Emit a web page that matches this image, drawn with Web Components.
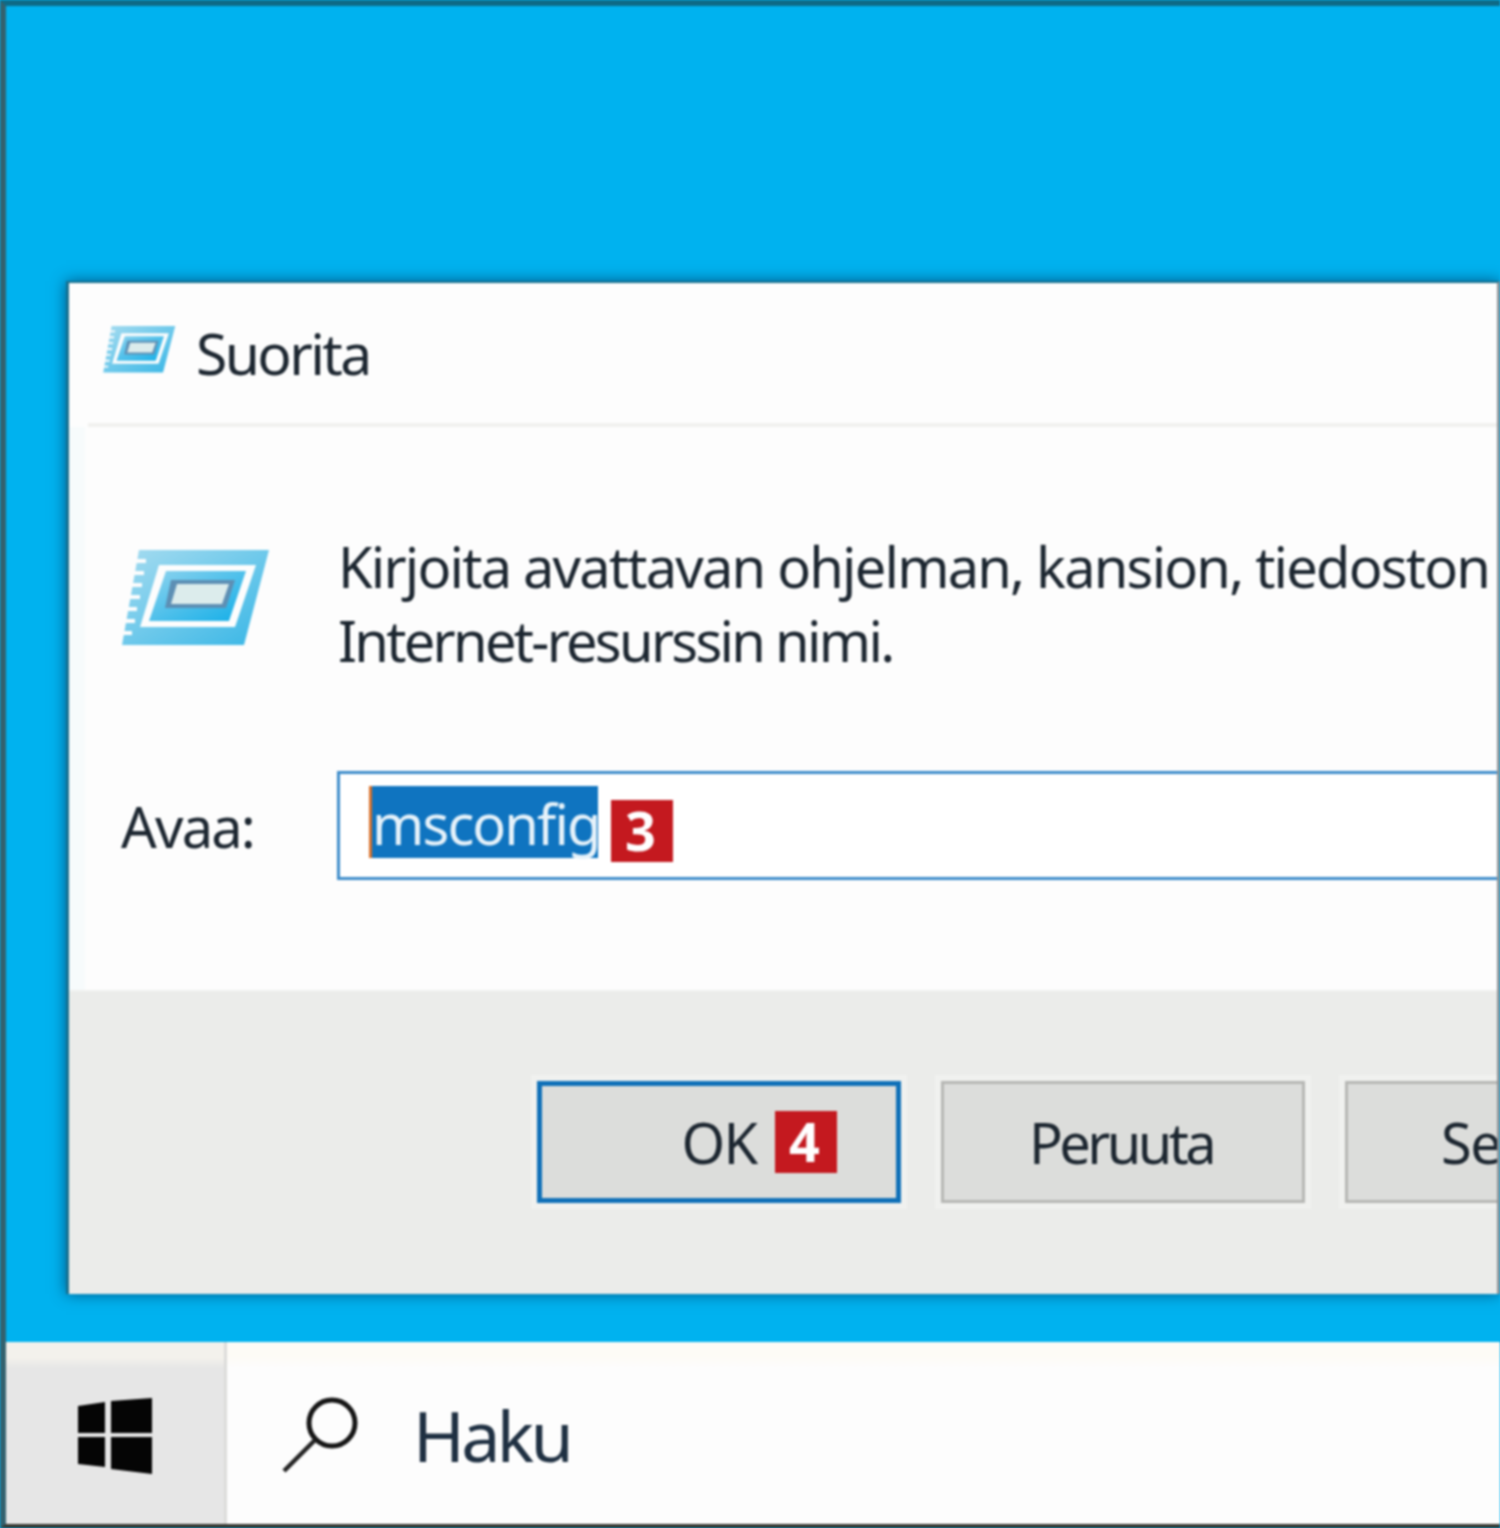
<!DOCTYPE html>
<html lang="fi">
<head>
<meta charset="utf-8">
<title>Suorita</title>
<style>
  html, body { margin: 0; padding: 0; background: #00b2ef; }
  body { width: 1500px; height: 1528px; overflow: hidden; font-family: "Noto Sans", "Open Sans", sans-serif; }
</style>
</head>
<body>
<win-screen>
  <run-dialog slot="desktop"></run-dialog>
  <task-bar slot="taskbar"></task-bar>
</win-screen>

<template id="run-icon-tpl">
  <style>
    :host { display: block; line-height: 0; }
    svg { display: block; width: 100%; height: 100%; }
  </style>
  <svg viewBox="0 0 148 98" aria-hidden="true">
    <defs>
      <linearGradient id="band" x1="0" y1="0" x2="1" y2="1">
        <stop offset="0" stop-color="#a6dcf0"/>
        <stop offset="1" stop-color="#37b6e6"/>
      </linearGradient>
      <linearGradient id="core" x1="0" y1="0" x2="1" y2="1">
        <stop offset="0" stop-color="#8ed3ee"/>
        <stop offset="1" stop-color="#12aee8"/>
      </linearGradient>
    </defs>
    <path d="M17 2H147L122 97H0Z" fill="url(#band)"/>
    <path d="M0 13H24M0 25H22M0 37H20M0 49H18M0 61H15M0 73H13M0 85H10" stroke="#fdfdfd" stroke-width="4"/>
    <path d="M37 17H134L113 79H18Z" fill="#fdfdfd"/>
    <path d="M44 23H124L107 73H27Z" fill="url(#core)"/>
    <path d="M49 32H113L104 60H43Z" fill="#5d8fb4"/>
    <path d="M55 36H107L100 56H49Z" fill="#dcecec"/>
  </svg>
</template>

<template id="step-badge-tpl">
  <style>
    :host {
      display: flex; align-items: center; justify-content: center;
      position: absolute; width: 62px; height: 62px; box-sizing: border-box;
      padding: 0 3px 3px 0;
      background: #c4191f; color: #fff; letter-spacing: 0;
      font: 700 54px/1 "Noto Sans", sans-serif;
    }
  </style>
  <slot></slot>
</template>

<template id="win-button-tpl">
  <style>
    :host {
      display: flex; align-items: center; justify-content: center;
      position: relative; flex: none; box-sizing: border-box;
      width: 364px; height: 122px;
      background: #dcdddb; border: 3px solid #b6b7b4;
      color: #1c2630; font-size: 56px; letter-spacing: -1.6px;
      box-shadow: 0 0 0 6px #f0f1ef;
    }
    :host([focused]) { border: 5px solid #0f70b8; }
  </style>
  <slot></slot>
</template>

<template id="run-dialog-tpl">
  <style>
    :host {
      display: flex; flex-direction: column; box-sizing: border-box;
      width: 1434px; height: 1013px;
      background: #fdfdfd; color: #1c2630;
      border-top: 2px solid #17708f; border-left: 3px solid #17708f;
      border-right: 3px solid #8c9499;
      box-shadow: 0 0 14px rgba(0, 50, 90, .7);
      font-size: 56px; letter-spacing: -1.8px;
    }
    .title {
      display: flex; align-items: center; flex: none; box-sizing: border-box;
      height: 140px; padding: 0 0 0 34px; gap: 20px;
    }
    .title run-icon { width: 73px; height: 48px; margin-top: -8px; }
    .title span { font-size: 57px; line-height: 1; letter-spacing: -2.6px; }
    .sep { flex: none; height: 4px; margin-left: 19px; background: #f1f1ef; }
    .main {
      flex: 1; box-sizing: border-box; padding: 122px 0 0 53px;
      background: linear-gradient(90deg, #f7fbfc 0 15px, #fdfdfd 17px);
      overflow: hidden;
    }
    .message { display: flex; align-items: flex-start; gap: 68px; height: 222px; }
    .message run-icon { flex: none; width: 148px; height: 98px; margin-top: -1px; }
    .message p { margin: -20px 0 0; line-height: 74px; white-space: nowrap; }
    .message .short { letter-spacing: -2.7px; }
    .open { display: flex; align-items: center; gap: 80px; height: 109px; }
    .open label { flex: none; width: 136px; margin-left: -1px; }
    .field {
      flex: none; width: 1200px; height: 109px; box-sizing: border-box;
      display: flex; align-items: center; position: relative;
      background: #fff; border: 3px solid #3d8cca;
      padding-left: 29px;
    }
    .sel {
      display: block; width: 229px; height: 72px; box-sizing: border-box;
      margin-top: -7px; background: #0f74c0; color: #e6f2fa;
      border-left: 3px solid #d8702a; line-height: 74px; white-space: nowrap;
      letter-spacing: -1.9px;
    }
    .field step-badge { left: 271px; top: 26px; }
    .footer {
      flex: none; box-sizing: border-box; height: 304px;
      padding: 89px 0 0 468px;
      display: flex; gap: 40px; background: #ebecea;
      border-top: 2px solid #eff0ee; overflow: hidden;
    }
    .footer step-badge { left: 233px; top: 25px; }
    .tight { letter-spacing: -3.6px; padding-right: 4px; }
  </style>
  <div class="title"><run-icon></run-icon><span>Suorita</span></div>
  <div class="sep"></div>
  <div class="main">
    <div class="message">
      <run-icon></run-icon>
      <p>Kirjoita avattavan ohjelman, kansion, tiedoston tai<br><span class="short">Internet-resurssin nimi.</span></p>
    </div>
    <div class="open">
      <label>Avaa:</label>
      <div class="field"><span class="sel">msconfig</span><step-badge>3</step-badge></div>
    </div>
  </div>
  <div class="footer">
    <win-button focused>OK<step-badge>4</step-badge></win-button>
    <win-button class="tight">Peruuta</win-button>
    <win-button>Selaa...</win-button>
  </div>
</template>

<template id="task-bar-tpl">
  <style>
    :host { display: flex; flex: none; height: 182px; background: #fdfdfd; }
    .start {
      flex: none; width: 221px; display: flex; align-items: flex-start; justify-content: center;
      box-sizing: border-box; padding: 56px 0 0 0;
      background: linear-gradient(#f3f1ec 0 16px, #e6e6e6 26px);
      border-right: 3px solid #dcdcda;
    }
    .start svg { display: block; width: 74px; height: 76px; }
    .search {
      flex: 1; display: flex; align-items: center; box-sizing: border-box;
      padding: 0 0 0 52px; gap: 52px;
      background: linear-gradient(#fdfbf6 0 14px, #fdfdfd 26px);
    }
    .search svg { display: block; flex: none; width: 82px; height: 78px; margin-top: 4px; }
    .search span { font-size: 70px; line-height: 1; color: #1f3042; letter-spacing: -3.7px; margin-top: 4px; }
  </style>
  <div class="start">
    <svg viewBox="0 0 74 76" aria-hidden="true">
      <path d="M0 8 27 4V35H0ZM33 3 74 0V35H33ZM0 39H27V69L0 66ZM33 39H74V76L33 71Z" fill="#050505"/>
    </svg>
  </div>
  <div class="search">
    <svg viewBox="0 0 82 78" aria-hidden="true">
      <circle cx="53" cy="27" r="23" fill="none" stroke="#151515" stroke-width="5"/>
      <path d="M36 44 5 75" fill="none" stroke="#222" stroke-width="4.5"/>
    </svg>
    <span>Haku</span>
  </div>
</template>

<script>
  // every element just stamps its template into an open shadow root
  class TemplateElement extends HTMLElement {
    constructor(id) {
      super();
      this.attachShadow({ mode: 'open' });
      this.shadowRoot.appendChild(document.getElementById(id).content.cloneNode(true));
    }
  }

  class RunIcon extends TemplateElement { constructor() { super('run-icon-tpl'); } }
  class StepBadge extends TemplateElement { constructor() { super('step-badge-tpl'); } }
  class WinButton extends TemplateElement { constructor() { super('win-button-tpl'); } }
  class RunDialog extends TemplateElement { constructor() { super('run-dialog-tpl'); } }
  class TaskBar extends TemplateElement { constructor() { super('task-bar-tpl'); } }

  class WinScreen extends HTMLElement {
    constructor() {
      super();
      this.attachShadow({ mode: 'open' });
      this.shadowRoot.innerHTML = `
        <style>
          :host {
            display: flex; flex-direction: column; box-sizing: border-box;
            width: 1500px; height: 1528px; overflow: hidden;
            border-top: 6px solid #0e6a86; border-left: 6px solid #33626f;
            border-bottom: 4px solid #33352f;
            filter: blur(.9px);
          }
          .desktop {
            flex: 1; min-height: 0; box-sizing: border-box;
            padding: 275px 0 0 60px;
            background: #00b2ef; overflow: hidden;
          }
        </style>
        <div class="desktop"><slot name="desktop"></slot></div>
        <slot name="taskbar"></slot>
      `;
    }
  }

  customElements.define('run-icon', RunIcon);
  customElements.define('step-badge', StepBadge);
  customElements.define('win-button', WinButton);
  customElements.define('run-dialog', RunDialog);
  customElements.define('task-bar', TaskBar);
  customElements.define('win-screen', WinScreen);
</script>
</body>
</html>
